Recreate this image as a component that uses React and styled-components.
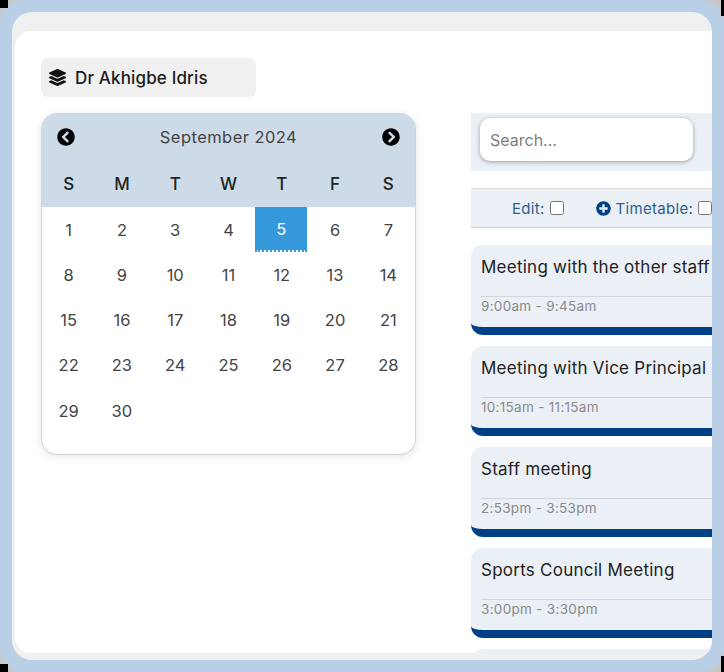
import React from 'react';
import styled, { createGlobalStyle } from 'styled-components';
import { FaLayerGroup, FaChevronCircleLeft, FaChevronCircleRight, FaPlusCircle } from 'react-icons/fa';

const GlobalStyle = createGlobalStyle`
  html, body {
    margin: 0;
    padding: 0;
    background: #c9c9c9;
  }
  * {
    box-sizing: border-box;
  }
`;

const Stage = styled.div`
  position: relative;
  width: 724px;
  height: 672px;
  overflow: hidden;
`;

// black scraps left at the corners of the screenshot
const CornerMark = styled.i`
  position: absolute;
  width: ${(p) => p.$w}px;
  height: ${(p) => p.$h}px;
  background: #000;
  ${(p) => (p.$right ? 'right: 0;' : 'left: 0;')}
  ${(p) => (p.$bottom ? 'bottom: 0;' : 'top: 0;')}
`;

const Frame = styled.div`
  width: 724px;
  height: 672px;
  padding: 12px;
  background: #b9cfe6;
  border-radius: 24px;
  overflow: hidden;
  font-family: 'Inter', 'Noto Sans', sans-serif;
`;

const Window = styled.div`
  height: 648px;
  padding: 19px 0 7px 3px;
  background: #f0f0f0;
  border-radius: 20px;
  overflow: hidden;
`;

const Panel = styled.main`
  height: 622px;
  padding: 27px 0 0 26px;
  background: #fff;
  border-radius: 16px 0 0 16px;
  overflow: hidden;
`;

const Columns = styled.div`
  display: grid;
  grid-template-columns: 375px 300px;
  column-gap: 55px;
`;

const LeftColumn = styled.section`
  display: flex;
  flex-direction: column;
  gap: 16px;
`;

const UserChip = styled.div`
  display: flex;
  align-items: center;
  gap: 9px;
  width: 215px;
  height: 39px;
  padding-left: 8px;
  background: #f0f0f0;
  border-radius: 6px;
  color: #1c1c1c;
  font-size: 17px;
  font-weight: 500;
  letter-spacing: 0.15px;
`;

const Calendar = styled.div`
  height: 342px;
  background: #fff;
  border: 1px solid #d4d4d4;
  border-top: 0;
  border-radius: 16px;
  box-shadow: 0 2px 10px rgba(0, 0, 0, 0.1);
  overflow: hidden;
`;

const CalendarHead = styled.header`
  height: 94px;
  background: #cddae8;
`;

const MonthBar = styled.div`
  display: flex;
  align-items: center;
  justify-content: space-between;
  height: 48px;
  padding: 0 15px;
  color: #444;
  font-size: 16.5px;
  letter-spacing: 0.45px;
`;

const WeekRow = styled.div`
  display: grid;
  grid-template-columns: repeat(7, 1fr);
  height: 46px;
  align-items: center;
  text-align: center;
  color: #222;
  font-size: 17px;
  font-weight: 500;
`;

const DayGrid = styled.div`
  display: grid;
  grid-template-columns: repeat(7, 1fr);
  grid-auto-rows: 45.3px;
  justify-items: start;
`;

const Day = styled.div`
  display: flex;
  align-items: center;
  justify-content: center;
  width: ${(p) => (p.$today ? '52px' : '100%')};
  height: 45px;
  color: ${(p) => (p.$today ? '#fff' : '#444')};
  background: ${(p) => (p.$today ? '#3498db' : 'transparent')};
  border-bottom: ${(p) => (p.$today ? '2px dotted #3498db' : '0')};
  background-clip: padding-box;
  font-size: 16.5px;
`;

const RightColumn = styled.section`
  display: flex;
  flex-direction: column;
  min-width: 0;
  padding-top: 55px;
`;

const SearchBar = styled.div`
  height: 58px;
  padding: 5px 0 0 9px;
  background: #ebf0f6;
`;

const SearchInput = styled.input`
  display: block;
  width: 213px;
  height: 43px;
  padding: 0 10px;
  background: #fff;
  border: 0;
  border-radius: 10px;
  box-shadow: 0 1px 4px rgba(0, 0, 0, 0.35);
  font-family: inherit;
  font-size: 16px;
  &::placeholder {
    color: #807d7d;
  }
`;

const Toolbar = styled.div`
  display: flex;
  align-items: center;
  gap: 33px;
  height: 40px;
  margin-top: 17px;
  padding-left: 41px;
  background: #ebf0f6;
  border-top: 1px solid #ddd;
  border-bottom: 1px solid #cfd3d8;
  color: #2b5f90;
  font-size: 15px;
  letter-spacing: 0.3px;
  white-space: nowrap;
`;

const ToolLabel = styled.label`
  display: flex;
  align-items: center;
  gap: 5px;
`;

const ToolCheck = styled.input`
  width: 14px;
  height: 14px;
  margin: 0;
  flex: none;
`;

const PlusIcon = styled(FaPlusCircle)`
  margin-left: -1px;
  color: #004085;
  font-size: 15px;
`;

const CardList = styled.div`
  display: flex;
  flex-direction: column;
  gap: 11px;
  margin-top: 17px;
`;

const Card = styled.article`
  flex: none;
  height: 90px;
  padding-left: 10px;
  background: #ebf0f6;
  border-bottom: 8px solid #004085;
  border-radius: 12px 0 0 12px;
`;

const CardTitle = styled.h3`
  height: 52px;
  margin: 0;
  padding-top: 11px;
  border-bottom: 1px solid #d2d5d9;
  color: #222;
  font-size: 17px;
  font-weight: 400;
  letter-spacing: 0.25px;
  line-height: 22px;
  white-space: nowrap;
`;

const CardTime = styled.p`
  margin: 0;
  color: #8a8a8a;
  font-size: 13.5px;
  letter-spacing: 0.3px;
  line-height: 18px;
`;

const weekDays = ['S', 'M', 'T', 'W', 'T', 'F', 'S'];
const days = Array.from({ length: 30 }, (_, i) => i + 1);
const meetings = [
  { title: 'Meeting with the other staff', time: '9:00am - 9:45am' },
  { title: 'Meeting with Vice Principal', time: '10:15am - 11:15am' },
  { title: 'Staff meeting', time: '2:53pm - 3:53pm' },
  { title: 'Sports Council Meeting', time: '3:00pm - 3:30pm' },
  { title: '', time: '' },
];

export default function App() {
  return (
    <>
      <GlobalStyle />
      <Stage>
        <Frame>
          <Window>
            <Panel>
              <Columns>
                <LeftColumn>
                  <UserChip>
                    <FaLayerGroup size={17} color="#111" />
                    Dr Akhigbe Idris
                  </UserChip>
                  <Calendar>
                    <CalendarHead>
                      <MonthBar>
                        <FaChevronCircleLeft size={18} color="#000" />
                        September 2024
                        <FaChevronCircleRight size={18} color="#000" />
                      </MonthBar>
                      <WeekRow>
                        {weekDays.map((d, i) => (
                          <span key={i}>{d}</span>
                        ))}
                      </WeekRow>
                    </CalendarHead>
                    <DayGrid>
                      {days.map((d) => (
                        <Day key={d} $today={d === 5}>
                          {d}
                        </Day>
                      ))}
                    </DayGrid>
                  </Calendar>
                </LeftColumn>
                <RightColumn>
                  <SearchBar>
                    <SearchInput placeholder="Search..." readOnly />
                  </SearchBar>
                  <Toolbar>
                    <ToolLabel>
                      Edit: <ToolCheck type="checkbox" readOnly />
                    </ToolLabel>
                    <ToolLabel>
                      <PlusIcon /> Timetable: <ToolCheck type="checkbox" readOnly />
                    </ToolLabel>
                  </Toolbar>
                  <CardList>
                    {meetings.map((m, i) => (
                      <Card key={i}>
                        <CardTitle>{m.title}</CardTitle>
                        <CardTime>{m.time}</CardTime>
                      </Card>
                    ))}
                  </CardList>
                </RightColumn>
              </Columns>
            </Panel>
          </Window>
        </Frame>
        <CornerMark $w={8} $h={8} />
        <CornerMark $w={3} $h={16} $right />
        <CornerMark $w={8} $h={8} $bottom />
        <CornerMark $w={3} $h={16} $right $bottom />
      </Stage>
    </>
  );
}
